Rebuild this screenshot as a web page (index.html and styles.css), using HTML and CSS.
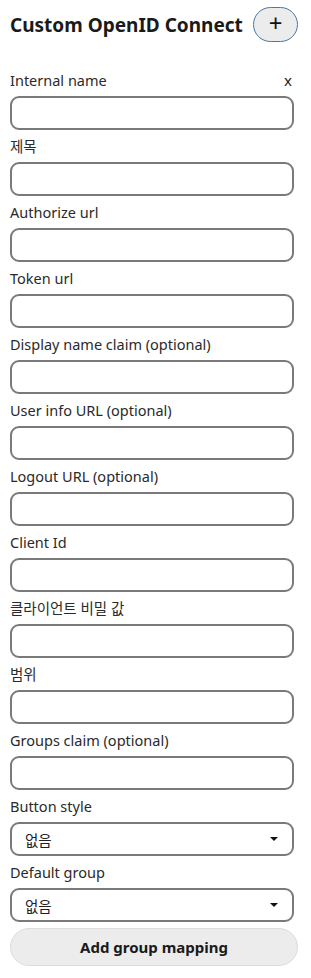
FILE: index.html
```html
<!DOCTYPE html>
<html lang="ko">
<head>
    <meta charset="UTF-8">
    <meta name="viewport" content="width=device-width, initial-scale=1.0">
    <title>Custom OpenID Connect</title>
    <link rel="stylesheet" href="styles.css">
</head>
<body>
    <div class="provider">
        <div class="provider-header">
            <h2>Custom OpenID Connect</h2>
            <button class="add-btn">+</button>
        </div>

        <div class="field">
            <div class="field-label">
                <span>Internal name</span>
                <span class="remove">x</span>
            </div>
            <input type="text">
        </div>
        <div class="field">
            <div class="field-label">제목</div>
            <input type="text">
        </div>
        <div class="field">
            <div class="field-label">Authorize url</div>
            <input type="text">
        </div>
        <div class="field">
            <div class="field-label">Token url</div>
            <input type="text">
        </div>
        <div class="field">
            <div class="field-label">Display name claim (optional)</div>
            <input type="text">
        </div>
        <div class="field">
            <div class="field-label">User info URL (optional)</div>
            <input type="text">
        </div>
        <div class="field">
            <div class="field-label">Logout URL (optional)</div>
            <input type="text">
        </div>
        <div class="field">
            <div class="field-label">Client Id</div>
            <input type="text">
        </div>
        <div class="field">
            <div class="field-label">클라이언트 비밀 값</div>
            <input type="text">
        </div>
        <div class="field">
            <div class="field-label">범위</div>
            <input type="text">
        </div>
        <div class="field">
            <div class="field-label">Groups claim (optional)</div>
            <input type="text">
        </div>
        <div class="field">
            <div class="field-label">Button style</div>
            <div class="select">
                <span>없음</span>
                <span class="caret"></span>
            </div>
        </div>
        <div class="field">
            <div class="field-label">Default group</div>
            <div class="select">
                <span>없음</span>
                <span class="caret"></span>
            </div>
        </div>

        <button class="mapping-btn">Add group mapping</button>
    </div>
</body>
</html>
```

FILE: styles.css
```css
body {
    margin: 0;
    font-family: "Noto Sans", "Noto Sans CJK KR", sans-serif;
    color: #222;
    background: white;
}

.provider {
    width: 288px;
    padding: 7px 0 0 10px;
}

.provider-header {
    display: flex;
    align-items: center;
    justify-content: space-between;
    height: 35px;
    margin-bottom: 28px;
}

.provider-header h2 {
    margin: 0;
    font-size: 19px;
    font-weight: bold;
    color: #1a1a1a;
    white-space: nowrap;
}

.add-btn {
    flex-shrink: 0;
    width: 45px;
    height: 35px;
    border: 1px solid #4a78a8;
    border-radius: 18px;
    background: #ececec;
    color: #111;
    font-family: "Noto Sans", sans-serif;
    font-size: 24px;
    line-height: 1;
    padding: 0 0 3px;
}

.field {
    margin-bottom: 6px;
}

.field-label {
    display: flex;
    justify-content: space-between;
    height: 20px;
    line-height: 20px;
    font-size: 14.5px;
    margin-bottom: 6px;
    padding-right: 6px;
    color: #2a2a2a;
}

.remove {
    font-size: 15px;
    color: #222;
}

input {
    display: block;
    box-sizing: border-box;
    width: 284px;
    height: 34px;
    border: 2px solid #7a7a7a;
    border-radius: 9px;
    padding: 0 12px;
    font-size: 14px;
}

.select {
    box-sizing: border-box;
    width: 284px;
    height: 34px;
    border: 2px solid #7a7a7a;
    border-radius: 9px;
    padding: 0 13px;
    display: flex;
    align-items: center;
    justify-content: space-between;
    font-size: 14.5px;
}

.caret {
    width: 0;
    height: 0;
    border-left: 4px solid transparent;
    border-right: 4px solid transparent;
    border-top: 4px solid #111;
    margin-right: 1px;
}

.mapping-btn {
    display: block;
    width: 288px;
    height: 38px;
    margin-top: 1px;
    border: 1px solid #dcdcdc;
    border-radius: 19px;
    background: #ececec;
    font-family: "Noto Sans", "Noto Sans CJK KR", sans-serif;
    font-size: 15px;
    font-weight: bold;
    color: #1a1a1a;
}
```
